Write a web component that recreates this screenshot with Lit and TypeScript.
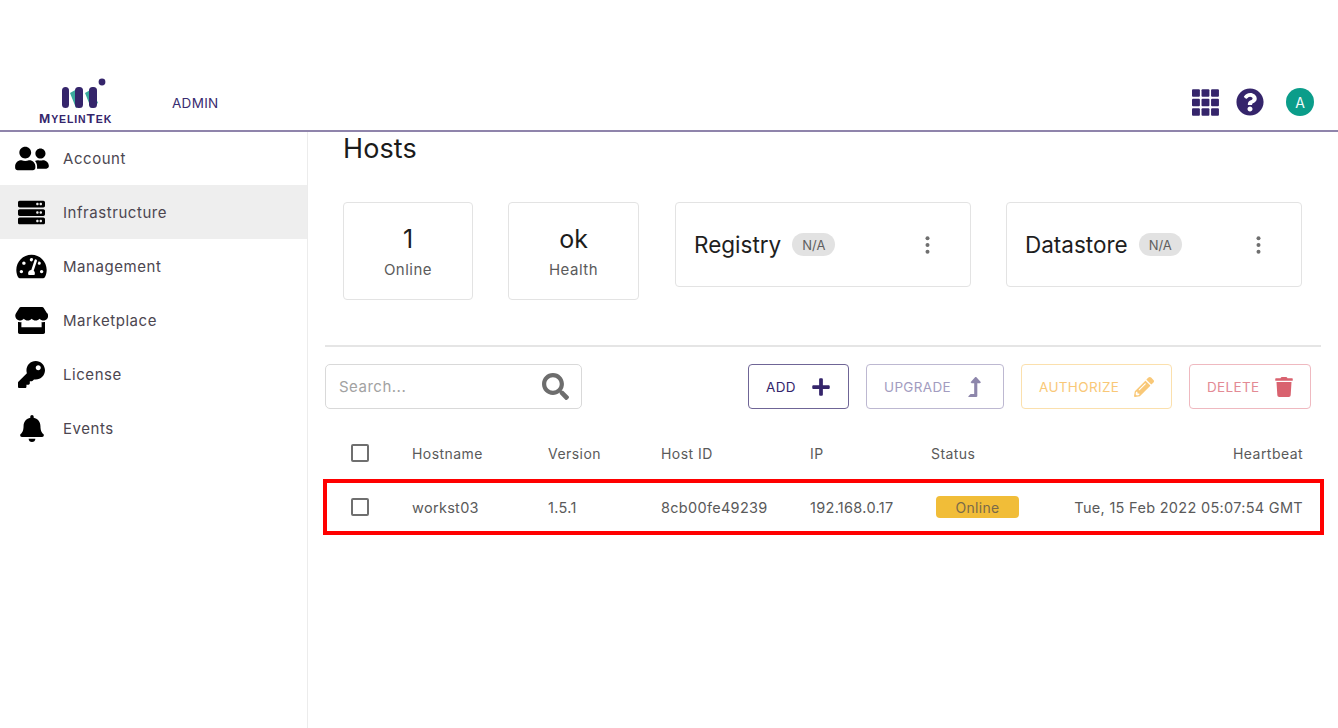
import { LitElement, html, css, svg } from "lit";
import { customElement } from "lit/decorators.js";

const P = {
  friends: "M192 256c61.9 0 112-50.1 112-112S253.9 32 192 32 80 82.1 80 144s50.1 112 112 112zm76.8 32h-8.3c-20.8 10-43.9 16-68.5 16s-47.6-6-68.5-16h-8.3C51.6 288 0 339.6 0 403.2V432c0 26.5 21.5 48 48 48h288c26.5 0 48-21.5 48-48v-28.8c0-63.6-51.6-115.2-115.2-115.2zM480 256c53 0 96-43 96-96s-43-96-96-96-96 43-96 96 43 96 96 96zm48 32h-3.8c-13.9 4.8-28.6 8-44.2 8s-30.3-3.2-44.2-8H432c-20.4 0-39.2 5.9-55.7 15.4 24.4 26.3 39.7 61.2 39.7 99.8v38.4c0 2.2-.5 4.3-.6 6.4H592c26.5 0 48-21.5 48-48 0-61.9-50.1-112-112-112z",
  server: "M480 160H32c-17.673 0-32-14.327-32-32V64c0-17.673 14.327-32 32-32h448c17.673 0 32 14.327 32 32v64c0 17.673-14.327 32-32 32zm-48-88c-13.255 0-24 10.745-24 24s10.745 24 24 24 24-10.745 24-24-10.745-24-24-24zm-64 0c-13.255 0-24 10.745-24 24s10.745 24 24 24 24-10.745 24-24-10.745-24-24-24zm112 248H32c-17.673 0-32-14.327-32-32v-64c0-17.673 14.327-32 32-32h448c17.673 0 32 14.327 32 32v64c0 17.673-14.327 32-32 32zm-48-88c-13.255 0-24 10.745-24 24s10.745 24 24 24 24-10.745 24-24-10.745-24-24-24zm-64 0c-13.255 0-24 10.745-24 24s10.745 24 24 24 24-10.745 24-24-10.745-24-24-24zm112 248H32c-17.673 0-32-14.327-32-32v-64c0-17.673 14.327-32 32-32h448c17.673 0 32 14.327 32 32v64c0 17.673-14.327 32-32 32zm-48-88c-13.255 0-24 10.745-24 24s10.745 24 24 24 24-10.745 24-24-10.745-24-24-24zm-64 0c-13.255 0-24 10.745-24 24s10.745 24 24 24 24-10.745 24-24-10.745-24-24-24z",
  gauge: "M288 32C128.94 32 0 160.94 0 320c0 52.8 14.25 102.26 39.06 144.8 5.61 9.62 16.3 15.2 27.44 15.2h443c11.14 0 21.83-5.58 27.44-15.2C561.75 422.26 576 372.8 576 320c0-159.06-128.94-288-288-288zm0 64c14.71 0 26.58 10.13 30.32 23.65-1.11 2.26-2.64 4.23-3.45 6.67l-9.22 27.67c-5.13 3.49-10.97 6.01-17.64 6.01-17.67 0-32-14.33-32-32S270.33 96 288 96zM96 384c-17.67 0-32-14.33-32-32s14.33-32 32-32 32 14.33 32 32-14.33 32-32 32zm48-160c-17.67 0-32-14.33-32-32s14.33-32 32-32 32 14.33 32 32-14.33 32-32 32zm246.77-72.41l-61.33 184C343.13 347.33 352 364.54 352 384c0 11.72-3.38 22.55-8.88 32H232.88c-5.5-9.45-8.88-20.28-8.88-32 0-33.94 26.5-61.43 59.9-63.59l61.34-184.01c4.17-12.56 17.73-19.45 30.36-15.17 12.57 4.19 19.35 17.79 15.17 30.36zm14.66 57.2l15.52-46.55c3.47-1.29 7.13-2.23 11.05-2.23 17.67 0 32 14.33 32 32s-14.33 32-32 32c-11.38-.01-20.89-6.28-26.57-15.22zM480 384c-17.67 0-32-14.33-32-32s14.33-32 32-32 32 14.33 32 32-14.33 32-32 32z",
  store: "M602 118.6L537.1 15C531.3 5.7 521 0 510 0H106C95 0 84.7 5.7 78.9 15L14 118.6c-33.9 54.1-3.9 129.3 59.4 137.9 4.6.6 9.2.9 13.7.9 29.9 0 56.4-13.1 74.8-33.4 18.4 20.3 45 33.4 74.8 33.4 29.9 0 56.4-13.1 74.8-33.4 18.4 20.3 45 33.4 74.8 33.4 29.9 0 56.4-13.1 74.8-33.4 18.5 20.3 45 33.4 74.8 33.4 4.6 0 9.1-.3 13.7-.9 63.5-8.5 93.6-83.7 59.6-137.9zM529.5 288c-10 0-19.9-1.5-29.5-3.8V384H116v-99.8c-9.6 2.2-19.5 3.8-29.5 3.8-6 0-12.1-.4-18-1.2-5.6-.8-11.1-2.1-16.4-3.6V480c0 17.7 14.3 32 32 32h448c17.7 0 32-14.3 32-32V283.2c-5.4 1.6-10.8 2.9-16.4 3.6-6.1.8-12.1 1.2-18.2 1.2z",
  key: "M512 176.001C512 273.203 433.202 352 336 352c-11.22 0-22.19-1.062-32.827-3.069l-24.012 27.014A23.999 23.999 0 0 1 261.223 384H224v40c0 13.255-10.745 24-24 24h-40v40c0 13.255-10.745 24-24 24H24c-13.255 0-24-10.745-24-24v-78.059c0-6.365 2.529-12.47 7.029-16.971l161.802-161.802C163.108 213.814 160 195.271 160 176 160 78.798 238.797.001 335.999 0 433.488-.001 512 78.511 512 176.001zM336 128c0 26.51 21.49 48 48 48s48-21.49 48-48-21.49-48-48-48-48 21.49-48 48z",
  bell: "M224 512c35.32 0 63.97-28.65 63.97-64H160.03c0 35.35 28.65 64 63.97 64zm215.39-149.71c-19.32-20.76-55.47-51.99-55.47-154.29 0-77.7-54.48-139.9-127.94-155.16V32c0-17.67-14.32-32-31.98-32s-31.98 14.33-31.98 32v20.84C118.56 68.1 64.08 130.3 64.08 208c0 102.3-36.15 133.53-55.47 154.29-6 6.45-8.66 14.16-8.61 21.71.11 16.4 12.98 32 32.1 32h383.8c19.12 0 32-15.6 32.1-32 .05-7.55-2.61-15.27-8.61-21.71z",
  help: "M504 256c0 136.997-111.043 248-248 248S8 392.997 8 256C8 119.083 119.043 8 256 8s248 111.083 248 248zM262.655 90c-54.497 0-89.255 22.957-116.549 63.758-3.536 5.286-2.353 12.415 2.715 16.258l34.699 26.31c5.205 3.947 12.621 3.008 16.665-2.122 17.864-22.658 30.113-35.797 57.303-35.797 20.429 0 45.698 13.148 45.698 32.958 0 14.976-12.363 22.667-32.534 33.976C247.128 238.528 216 254.941 216 296v4c0 6.627 5.373 12 12 12h56c6.627 0 12-5.373 12-12v-1.333c0-28.462 83.186-29.647 83.186-106.667 0-58.002-60.165-102-116.531-102zM256 338c-25.365 0-46 20.635-46 46 0 25.364 20.635 46 46 46s46-20.636 46-46c0-25.365-20.635-46-46-46z",
  search: "M505 442.7L405.3 343c-4.5-4.5-10.6-7-17-7H372c27.6-35.3 44-79.7 44-128C416 93.1 322.9 0 208 0S0 93.1 0 208s93.1 208 208 208c48.3 0 92.7-16.4 128-44v16.3c0 6.4 2.5 12.5 7 17l99.7 99.7c9.4 9.4 24.6 9.4 33.9 0l28.3-28.3c9.4-9.4 9.4-24.6.1-34zM208 336c-70.7 0-128-57.2-128-128 0-70.7 57.2-128 128-128 70.7 0 128 57.2 128 128 0 70.7-57.2 128-128 128z",
  plus: "M416 208H272V64c0-17.67-14.33-32-32-32h-32c-17.67 0-32 14.33-32 32v144H32c-17.67 0-32 14.33-32 32v32c0 17.67 14.33 32 32 32h144v144c0 17.67 14.33 32 32 32h32c17.67 0 32-14.33 32-32V304h144c17.67 0 32-14.33 32-32v-32c0-17.67-14.33-32-32-32z",
  up: "M313.553 119.669L209.587 7.666c-9.485-10.214-25.676-10.229-35.174 0L70.438 119.669C56.232 134.969 67.062 160 88.025 160H152v272H68.024a11.996 11.996 0 0 0-8.485 3.515l-56 56C-4.021 499.074 1.333 512 12.024 512H208c13.255 0 24-10.745 24-24V160h64c20.878 0 31.851-24.969 17.553-40.331z",
  pencil: "M497.9 142.1l-46.1 46.1c-4.7 4.7-12.3 4.7-17 0l-111-111c-4.7-4.7-4.7-12.3 0-17l46.1-46.1c18.7-18.7 49.1-18.7 67.9 0l60.1 60.1c18.8 18.7 18.8 49.1 0 67.9zM284.2 99.8L21.6 362.4.4 483.9c-2.9 16.4 11.4 30.6 27.8 27.8l121.5-21.3 262.6-262.6c4.7-4.7 4.7-12.3 0-17l-111-111c-4.8-4.7-12.4-4.7-17.1 0zM124.1 339.9c-5.5-5.5-5.5-14.3 0-19.8l154-154c5.5-5.5 14.3-5.5 19.8 0s5.5 14.3 0 19.8l-154 154c-5.5 5.5-14.3 5.5-19.8 0zM88 424h48v36.3l-64.5 11.3-31.1-31.1L51.7 376H88v48z",
  trash: "M432 32H312l-9.4-18.7A24 24 0 0 0 281.1 0H166.8a23.72 23.72 0 0 0-21.4 13.3L136 32H16A16 16 0 0 0 0 48v32a16 16 0 0 0 16 16h416a16 16 0 0 0 16-16V48a16 16 0 0 0-16-16zM53.2 467a48 48 0 0 0 47.9 45h245.8a48 48 0 0 0 47.9-45L416 128H32z",
};

const icon = (vb: string, d: string, w: number, h: number) => html`<svg class="ic" viewBox=${vb} width=${w} height=${h} fill="currentColor" aria-hidden="true"><path d=${d} fill-rule="evenodd"></path></svg>`;

const nav = [
  { label: "Account", vb: "0 0 640 512", d: P.friends, w: 34, h: 27 },
  { label: "Infrastructure", vb: "0 0 512 512", d: P.server, w: 27, h: 27, active: true },
  { label: "Management", vb: "0 0 576 512", d: P.gauge, w: 31, h: 27 },
  { label: "Marketplace", vb: "0 0 616 512", d: P.store, w: 33, h: 27 },
  { label: "License", vb: "0 0 512 512", d: P.key, w: 27, h: 27 },
  { label: "Events", vb: "0 0 448 512", d: P.bell, w: 24, h: 27 },
];

const kebab = html`<svg class="kebab" viewBox="0 0 4 18" width="5" height="18" fill="currentColor" aria-hidden="true"><circle cx="2" cy="2.2" r="2"></circle><circle cx="2" cy="9" r="2"></circle><circle cx="2" cy="15.8" r="2"></circle></svg>`;

const gridDots = svg`${[0, 1, 2].flatMap((r) => [0, 1, 2].map((c) => svg`<rect x=${c * 9.67} y=${r * 9.67} width="8" height="7.6" rx="1"></rect>`))}`;

@customElement("app-root")
export class AppRoot extends LitElement {
  static styles = css`
    :host {
      display: block;
      width: 1338px;
      height: 728px;
      overflow: hidden;
      background: #fff;
      font-family: Inter, "Open Sans", sans-serif;
      color: #4a4a4a;
    }
    * { box-sizing: border-box; }
    .ic { display: block; flex: none; }
    .top {
      height: 132px;
      border-bottom: 2px solid #8f84ab;
      display: flex;
      align-items: flex-start;
      padding-top: 78px;
    }
    .brand {
      width: 133px;
      margin-left: 39px;
      flex: none;
      display: flex;
      flex-direction: column;
      align-items: flex-start;
    }
    .mark { margin-left: 22px; display: block; }
    .word {
      font-family: "Liberation Sans", sans-serif;
      font-weight: 700;
      font-size: 10.5px;
      line-height: 14px;
      letter-spacing: 0.9px;
      color: #35256b;
      margin-top: 0;
      white-space: nowrap;
    }
    .word b { font-size: 13.5px; font-weight: 700; }
    .admin {
      font-size: 13.5px;
      letter-spacing: 0.3px;
      color: #3a2c70;
      margin-top: 17px;
      line-height: 16px;
    }
    .tools {
      margin-left: auto;
      display: flex;
      align-items: center;
      padding-right: 24px;
      height: 48px;
      margin-top: 0;
      color: #35256b;
    }
    .tools .help { margin-left: 17px; }
    .avatar {
      margin-left: 22px;
      width: 28px;
      height: 28px;
      border-radius: 50%;
      background: #0b9d8a;
      color: #f2fbfa;
      font-size: 14px;
      display: flex;
      align-items: center;
      justify-content: center;
    }
    .body { display: flex; height: 596px; }
    .side { width: 308px; flex: none; border-right: 1px solid #ececec; }
    .item {
      height: 54px;
      margin-top: 0;
      display: flex;
      align-items: center;
      color: #4c4650;
      font-size: 15px;
      letter-spacing: 0.55px;
    }
    .first { height: 53px; }
    .item.on { background: #eeeeee; }
    .slot { width: 63px; flex: none; display: flex; justify-content: center; color: #000; }
    .main { flex: 1; min-width: 0; padding: 0 18px 0 17px; }
    h1 {
      margin: 0 0 0 18px;
      height: 34px;
      font-weight: 400;
      font-size: 27px;
      line-height: 34px;
      color: #1b1b1b;
      letter-spacing: 0.1px;
    }
    .cards { display: flex; align-items: flex-start; margin: 36px 0 0 18px; }
    .card { border: 1px solid #e3e3e3; border-radius: 4px; background: #fff; }
    .stat {
      height: 98px;
      display: flex;
      flex-direction: column;
      align-items: center;
      padding-top: 20px;
    }
    .s1 { width: 130px; margin-right: 35px; }
    .s2 { width: 131px; margin-right: 36px; }
    .num { font-size: 25px; line-height: 32px; color: #1c1c1c; }
    .lab { font-size: 15px; line-height: 20px; letter-spacing: 0.5px; color: #5b5b5b; margin-top: 5px; }
    .wide {
      width: 296px;
      height: 85px;
      display: flex;
      align-items: center;
      padding-left: 18px;
      font-size: 22.5px;
      color: #1e1e1e;
    }
    .w1 { margin-right: 35px; }
    .pill {
      height: 23px;
      margin-left: 11px;
      padding: 0 10px;
      border-radius: 12px;
      background: #e2e2e2;
      color: #5f5f5f;
      font-size: 13px;
      display: flex;
      align-items: center;
    }
    .kebab { margin-left: auto; margin-right: 40px; color: #6f6f6f; flex: none; }
    .rule { height: 2px; background: #e5e5e5; margin-top: 45px; margin-right: -1px; }
    .bar { display: flex; align-items: stretch; height: 45px; margin-top: 17px; }
    .search {
      width: 257px;
      border: 1px solid #d9d9d9;
      border-radius: 5px;
      display: flex;
      align-items: center;
      padding: 0 12px 0 13px;
      color: #a2a2a2;
      font-size: 15px;
      letter-spacing: 0.5px;
    }
    .search .ic { margin-left: auto; color: #6d6d6d; }
    .btn {
      border: 1px solid;
      border-radius: 4px;
      display: flex;
      align-items: center;
      font-size: 13.5px;
      letter-spacing: 0.35px;
      padding-left: 17px;
      background: #fff;
    }
    .btn .ic { margin-left: auto; }
    .add { margin-left: 166px; width: 101px; color: #35256b; border-color: #6f6596; padding-right: 18px; }
    .upg { margin-left: 17px; width: 138px; color: #a29cbf; border-color: #bdb8d1; padding-right: 22px; }
    .upg .ic { color: #8d86ab; }
    .aut { margin-left: 17px; width: 151px; color: #f9c877; border-color: #fbe0ad; padding-right: 17px; }
    .del { margin-left: 17px; width: 122px; color: #e38a94; border-color: #efb9c0; padding-right: 17px; }
    .del .ic { color: #d9626f; }
    .row {
      display: grid;
      grid-template-columns: 87px 136px 113px 149px 121px 1fr;
      align-items: center;
      height: 54px;
      padding-right: 17px;
      font-size: 14.5px;
      letter-spacing: 0.3px;
      color: #5a5a5a;
    }
    .head { margin-top: 17px; font-size: 14px; letter-spacing: 0.45px; }
    .sel { position: relative; }
    .sel::after {
      content: "";
      position: absolute;
      inset: -1px -4px -1px -2px;
      border: 4px solid #f00;
      pointer-events: none;
    }
    .check {
      width: 18px;
      height: 18px;
      margin-left: 26px;
      border: 2px solid #6f6f6f;
      border-radius: 2px;
    }
    .right { text-align: right; white-space: nowrap; }
    .status {
      justify-self: start;
      margin-left: 5px;
      width: 83px;
      height: 22px;
      border-radius: 4px;
      background: #f1bd38;
      color: #7a6a4a;
      display: flex;
      align-items: center;
      justify-content: center;
      font-size: 14px;
    }
  `;

  render() {
    return html`
      <div class="top">
        <div class="brand">
          <svg class="mark" viewBox="0 0 46 34" width="46" height="34" aria-hidden="true">
            <path d="M9 15 L16 11 L22 25 L15 30 Z M24 15 L31 11 L37 25 L30 30 Z" fill="#3aa99c"></path>
            <g fill="#35256b">
              <rect x="1" y="9" width="7" height="21" rx="3.5"></rect>
              <rect x="14" y="9" width="8" height="21" rx="3.5"></rect>
              <rect x="28" y="9" width="8" height="21" rx="3.5"></rect>
            </g>
            <circle cx="41" cy="4" r="3.4" fill="#35256b"></circle>
          </svg>
          <div class="word"><b>M</b>YELIN<b>T</b>EK</div>
        </div>
        <div class="admin">ADMIN</div>
        <div class="tools">
          <svg viewBox="0 0 27.4 27" width="27" height="27" fill="currentColor" aria-hidden="true" class="ic">${gridDots}</svg>
          <span class="help">${icon("0 0 512 512", P.help, 28, 28)}</span>
          <div class="avatar">A</div>
        </div>
      </div>
      <div class="body">
        <nav class="side">
          ${nav.map((n, i) => html`<div class="item ${n.active ? "on" : ""} ${i === 0 ? "first" : ""}">
            <span class="slot">${icon(n.vb, n.d, n.w, n.h)}</span>${n.label}
          </div>`)}
        </nav>
        <main class="main">
          <h1>Hosts</h1>
          <section class="cards">
            <div class="card stat s1"><div class="num">1</div><div class="lab">Online</div></div>
            <div class="card stat s2"><div class="num">ok</div><div class="lab">Health</div></div>
            <div class="card wide w1">Registry<span class="pill">N/A</span>${kebab}</div>
            <div class="card wide">Datastore<span class="pill">N/A</span>${kebab}</div>
          </section>
          <div class="rule"></div>
          <div class="bar">
            <div class="search">Search...${icon("0 0 512 512", P.search, 27, 27)}</div>
            <div class="btn add">ADD${icon("0 0 448 512", P.plus, 18, 20)}</div>
            <div class="btn upg">UPGRADE${icon("0 0 320 512", P.up, 13, 20)}</div>
            <div class="btn aut">AUTHORIZE${icon("0 0 512 512", P.pencil, 20, 20)}</div>
            <div class="btn del">DELETE${icon("0 0 448 512", P.trash, 18, 20)}</div>
          </div>
          <div class="row head">
            <div class="check"></div><div>Hostname</div><div>Version</div><div>Host ID</div><div>IP</div>
            <div style="display:flex;justify-content:space-between"><span>Status</span><span>Heartbeat</span></div>
          </div>
          <div class="row sel">
            <div class="check"></div><div>workst03</div><div>1.5.1</div><div>8cb00fe49239</div><div>192.168.0.17</div>
            <div style="display:flex;justify-content:space-between;align-items:center"><span class="status">Online</span><span class="right">Tue, 15 Feb 2022 05:07:54 GMT</span></div>
          </div>
        </main>
      </div>
    `;
  }
}
